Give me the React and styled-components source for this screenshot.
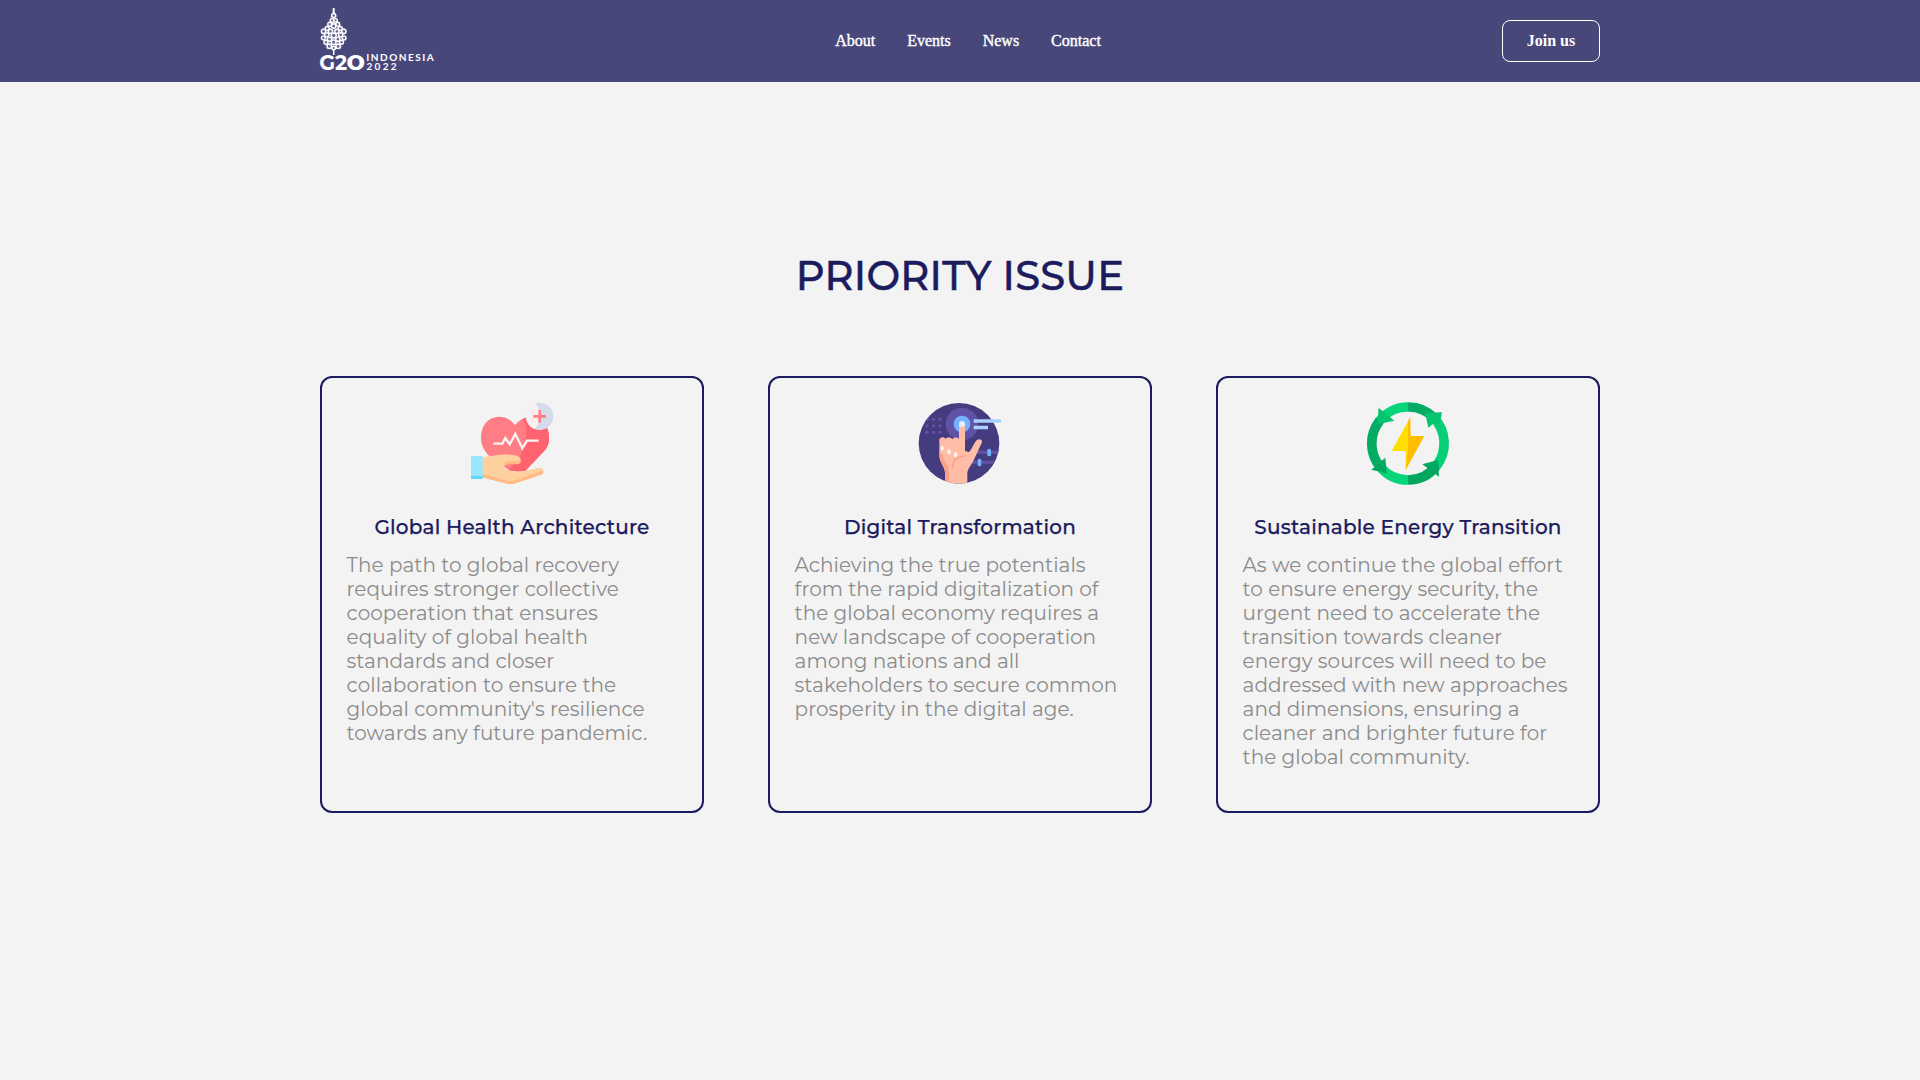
import React from "react";
import styled, { createGlobalStyle } from "styled-components";

const GlobalStyle = createGlobalStyle`
  *, *::before, *::after { box-sizing: border-box; }
  body {
    margin: 0;
    min-height: 100vh;
    background: #f3f3f3;
    font-family: Montserrat, Inter, "Liberation Sans", sans-serif;
  }
`;

const Header = styled.header`
  height: 82px;
  background: #48477a;
`;

const HeaderInner = styled.div`
  width: 1280px;
  height: 100%;
  margin: 0 auto;
  display: flex;
  align-items: center;
  justify-content: space-between;
`;

const Logo = styled.svg`
  display: block;
  width: 114px;
  height: 66px;
  overflow: visible;
`;

const Nav = styled.nav`
  display: flex;
  gap: 32px;
`;

const NavLink = styled.a`
  font: 500 16px/18px "Liberation Serif", "Times New Roman", serif;
  color: #fff;
  -webkit-text-stroke: 0.4px #fff;
`;

const JoinButton = styled.button`
  width: 98px;
  height: 42px;
  padding: 0;
  border: 1px solid #fff;
  border-radius: 8px;
  background: transparent;
  color: #fff;
  font: 700 16px/18px "Liberation Serif", "Times New Roman", serif;
`;

const Main = styled.main`
  width: 1280px;
  margin: 0 auto;
  padding-top: 169px;
`;

const Heading = styled.h1`
  margin: 0;
  text-align: center;
  font-size: 40px;
  line-height: 49px;
  font-weight: 500;
  letter-spacing: 0.22px;
  color: #1b1b5e;
  -webkit-text-stroke: 0.5px #1b1b5e;
`;

const CardGrid = styled.div`
  margin-top: 76px;
  display: grid;
  grid-template-columns: repeat(3, 384px);
  gap: 64px;
`;

const Card = styled.article`
  height: 437px;
  padding: 24px;
  border: 2px solid #1b1b5e;
  border-radius: 12px;
  display: flex;
  flex-direction: column;
  align-items: center;
`;

const Icon = styled.svg`
  display: block;
  flex: none;
  width: 82px;
  height: 82px;
  overflow: visible;
`;

const CardTitle = styled.h2`
  margin: 31px 0 14px;
  font-size: 20px;
  line-height: 24px;
  font-weight: 500;
  letter-spacing: 0.2px;
  color: #1b1b5e;
  -webkit-text-stroke: 0.25px #1b1b5e;
`;

const CardText = styled.p`
  margin: 0;
  padding-left: 0.6px;
  align-self: stretch;
  font-size: 20px;
  line-height: 24px;
  letter-spacing: 0.015px;
  color: #8b8b8b;
`;

const ornamentRings = [
  [14, 7.5, 2], [12.2, 12.4, 1.8], [15.8, 12.4, 1.8], [10, 16.2, 1.9], [18, 16.2, 1.9],
  [14, 18, 2.2], [7.5, 20.5, 2], [20.5, 20.5, 2],
  [3.8, 23.3, 2.2], [10.8, 23.3, 2.1], [17.2, 23.3, 2.1], [24.2, 23.3, 2.2],
  [7, 26.8, 2.1], [14, 27.5, 2.5], [21, 26.8, 2.1], [3.6, 30, 1.9], [24.4, 30, 1.9],
  [9.8, 31.2, 2.1], [18.2, 31.2, 2.1], [6.2, 34.2, 2], [14, 34.2, 2.3], [21.8, 34.2, 2],
  [9.6, 38.2, 2.2], [18.4, 38.2, 2.2], [14, 40, 1.8],
];

function G20Logo() {
  return (
    <Logo viewBox="0 0 114 66" role="img" aria-label="G20 Indonesia 2022">
      <g fill="none" stroke="#fff" strokeWidth="1.4" transform="translate(-0.3 0)">
        <path d="M14 0V5" strokeWidth="2" />
        <path
          d="M14 2L10.500 8L10 13L7 15.500L6 18.500L2.500 20.500L1.200 24L2.200 27L1.800 31L4.500 35L6.500 41.500H21.500L23.500 35L26.200 31L25.800 27L26.800 24L25.500 20.500L22 18.500L21 15.500L18 13L17.500 8Z"
          fill="#fff"
          stroke="none"
          fillOpacity="0.2"
        />
        {ornamentRings.map(([x, y, r]) => (
          <circle key={`${x}-${y}`} cx={x} cy={y} r={r} />
        ))}
        <path d="M14 41V47" strokeWidth="1.5" />
      </g>
      <g fill="#fff" fontFamily="Montserrat, Inter, sans-serif" fontSize="22" fontWeight="700">
        <text x="-0.8" y="61.5" textLength="28" lengthAdjust="spacingAndGlyphs">G2</text>
        <text x="26.3" y="61.5" textLength="19" lengthAdjust="spacingAndGlyphs">0</text>
      </g>
      <g fill="#fff" fontFamily="Lato, sans-serif" fontSize="10" fontWeight="700">
        <text x="46.3" y="52.6" textLength="67.5">INDONESIA</text>
        <text x="46.5" y="61.6" textLength="30">2022</text>
      </g>
    </Logo>
  );
}

function HealthIcon() {
  return (
    <Icon viewBox="33 36 246 246" aria-hidden="true">
      <path d="M165 106C147 82 125 79 110 81C80 84 63 111 63 143C63 170 78 190 95 205L150 243H196L252 184C264 171 268 157 267 140C266 108 247 82 214 80C192 80 176 91 165 106Z" fill="#ff7e85" />
      <path d="M188 87C196 99 199 113 199 129C199 171 176 216 146 239L172 245L195 243L252 184C264 171 268 157 267 140C266 108 247 82 214 80C204 80 195 83 188 87Z" fill="#ff636f" />
      <circle cx="239" cy="79" r="41" fill="#d5dbea" />
      <path d="M225 40C245 60 245 97 223 117C207 110 198 97 198 79C198 61 209 46 225 40Z" fill="#f8f0f0" />
      <path d="M239 60V98M220 79H258" fill="none" stroke="#ff7e85" strokeWidth="8" />
      <path d="M100 161H127L136 144L149 163L166 132L187 175L201 152H236" fill="none" stroke="#fbf3f3" strokeWidth="7" />
      <path d="M66 202L121 194C142 193 159 194 172 198C186 202 185 222 172 222H147C133 223 130 229 133 236C150 244 177 247 193 243L238 233C250 232 254 246 244 252L166 280C155 283 145 282 134 279L66 260Z" fill="#ffd09f" />
      <path d="M66 252L133 270C145 274 156 274 167 271L248 242C252 247 250 251 242 255L166 280C155 284 145 283 134 280L66 262Z" fill="#ffb983" />
      <path d="M182 207C184 217 178 224 169 223H147C136 224 132 229 133 237C128 219 136 214 149 214H169C176 213 181 212 182 207Z" fill="#ffb983" />
      <path d="M33 198H68V267H33Z" fill="#98e6fc" />
      <path d="M33 258H68V267H33Z" fill="#62d8f8" />
    </Icon>
  );
}

function DigitalIcon() {
  return (
    <Icon viewBox="42 36 246 246" aria-hidden="true">
      <clipPath id="disc">
        <circle cx="162" cy="160" r="121" />
      </clipPath>
      <circle cx="162" cy="160" r="121" fill="#453c80" />
      <g clipPath="url(#disc)">
        <circle cx="171" cy="102" r="49" fill="#6152a8" />
        <circle cx="171" cy="102" r="25" fill="#75b2fd" />
        {[88, 107.5, 127].flatMap((y) =>
          [66, 85.5, 105].map((x) => (
            <circle key={`${x}-${y}`} cx={x} cy={y} r="5" fill="#6152a8" />
          ))
        )}
        <path d="M210 187H290M195 217H290" stroke="#6152a8" strokeWidth="9" />
        <path d="M162 104C162 91 180 91 180 104V182L191 187C202 177 206 160 215 151C222 145 233 149 231 157L206 211C198 229 187 235 187 252V290H120V246C119 231 105 218 103 201V150C104 140 119 140 122 147C125 141 139 141 142 148C146 141 159 141 162 148Z" fill="#ffbda8" />
        <path d="M103 190L113 196C116 216 132 224 132 249V290H120V246C119 231 105 218 103 190Z" fill="#ff9f87" />
        <path d="M143 232C143 209 159 197 180 198" fill="none" stroke="#ff9f87" strokeWidth="5" strokeLinecap="round" />
      </g>
      <circle cx="171" cy="102" r="9" fill="#e5eefa" />
      <g fill="#fff1ec">
        <ellipse cx="112" cy="175" rx="5" ry="8" />
        <ellipse cx="132" cy="185" rx="5.5" ry="8" />
        <ellipse cx="152" cy="194" rx="5.5" ry="8" />
      </g>
      <path d="M206 93H288M206 112.5H249" stroke="#a8d2ff" strokeWidth="10" />
      <rect x="247" y="176" width="11" height="23" rx="5" fill="#75b2fd" />
      <rect x="218" y="206" width="11" height="23" rx="5" fill="#75b2fd" />
    </Icon>
  );
}

function EnergyIcon() {
  return (
    <Icon viewBox="42 36 246 246" aria-hidden="true">
      <g fill="none" strokeWidth="29">
        <path d="M77 96A108.5 109.5 0 0 1 165 51" stroke="#06d579" />
        <path d="M165 51A108.5 109.5 0 0 1 244 84" stroke="#04ab63" />
        <path d="M242 83A108.5 109.5 0 0 1 250 228" stroke="#06cf76" />
        <path d="M250 228A108.5 109.5 0 0 1 165 270" stroke="#04a760" />
        <path d="M165 270A108.5 109.5 0 0 1 81 230" stroke="#06d579" />
        <path d="M81 230A108.5 109.5 0 0 1 80 92" stroke="#04ab63" />
      </g>
      <path d="M77 53L124 92L73 103Z" fill="#06c370" />
      <path d="M267 67L258 112L242 100L226 113L216 68Z" fill="#06c370" />
      <path d="M97 203L101 250L55 239Z" fill="#04a760" />
      <path d="M208 223L255 210L258 260Z" fill="#04a760" />
      <path d="M172 82L116 183H158V239L164 230V95Z" fill="#ffde00" />
      <path d="M172 82L173 138H214L158 240L164 183V95Z" fill="#ffbd00" />
    </Icon>
  );
}

const links = ["About", "Events", "News", "Contact"];

const issues = [
  {
    icon: HealthIcon,
    title: "Global Health Architecture",
    text: "The path to global recovery requires stronger collective cooperation that ensures equality of global health standards and closer collaboration to ensure the global community's resilience towards any future pandemic.",
  },
  {
    icon: DigitalIcon,
    title: "Digital Transformation",
    text: "Achieving the true potentials from the rapid digitalization of the global economy requires a new landscape of cooperation among nations and all stakeholders to secure common prosperity in the digital age.",
  },
  {
    icon: EnergyIcon,
    title: "Sustainable Energy Transition",
    text: "As we continue the global effort to ensure energy security, the urgent need to accelerate the transition towards cleaner energy sources will need to be addressed with new approaches and dimensions, ensuring a cleaner and brighter future for the global community.",
  },
];

export default function App() {
  return (
    <>
      <GlobalStyle />
      <Header>
        <HeaderInner>
          <G20Logo />
          <Nav>
            {links.map((label) => (
              <NavLink key={label}>{label}</NavLink>
            ))}
          </Nav>
          <JoinButton>Join us</JoinButton>
        </HeaderInner>
      </Header>
      <Main>
        <Heading>PRIORITY ISSUE</Heading>
        <CardGrid>
          {issues.map(({ icon: IssueIcon, title, text }) => (
            <Card key={title}>
              <IssueIcon />
              <CardTitle>{title}</CardTitle>
              <CardText>{text}</CardText>
            </Card>
          ))}
        </CardGrid>
      </Main>
    </>
  );
}
